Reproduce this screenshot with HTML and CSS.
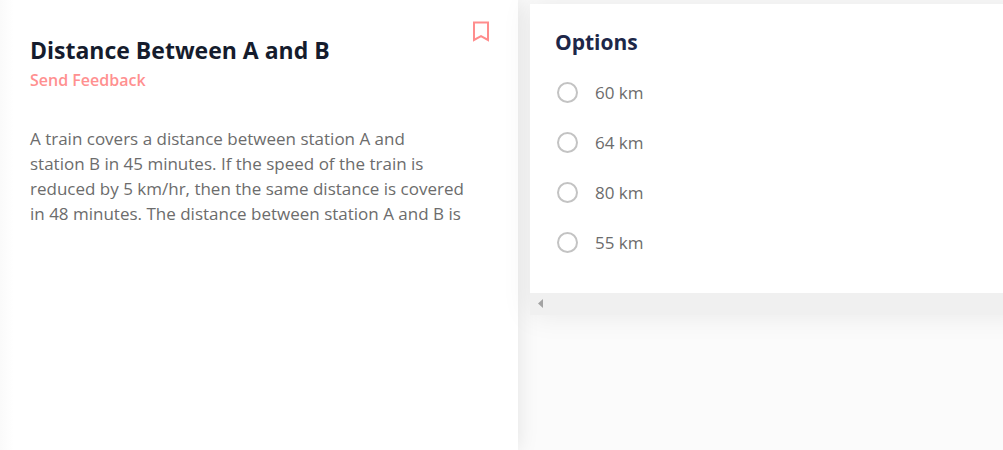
FILE: index.html
```html
<!DOCTYPE html>
<html lang="en">
<head>
<meta charset="utf-8">
<title>Distance Between A and B</title>
<link rel="stylesheet" href="styles.css">
</head>
<body>
<main class="layout">
  <section class="question">
    <header class="question-header">
      <div class="heading">
        <h1 class="title">Distance Between A and B</h1>
        <a class="feedback" href="#">Send Feedback</a>
      </div>
      <button class="bookmark" type="button" aria-label="Bookmark">
        <svg width="18" height="22" viewBox="0 0 18 22" fill="none" stroke="#ff8d8d" stroke-width="2"><path d="M2 2.5H16V20L9 16.2L2 20Z"/></svg>
      </button>
    </header>
    <p class="statement">A train covers a distance between station A and<br>station B in 45 minutes. If the speed of the train is<br>reduced by 5 km/hr, then the same distance is covered<br>in 48 minutes. The distance between station A and B is</p>
  </section>
  <section class="answer">
    <div class="card">
      <form class="options">
        <h2 class="options-title">Options</h2>
        <label class="option"><input class="radio" type="radio" name="answer">60 km</label>
        <label class="option"><input class="radio" type="radio" name="answer">64 km</label>
        <label class="option"><input class="radio" type="radio" name="answer">80 km</label>
        <label class="option"><input class="radio" type="radio" name="answer">55 km</label>
      </form>
      <div class="scrollbar">
        <button class="scroll-left" type="button" aria-label="Scroll left">
          <svg width="5" height="9" viewBox="0 0 5 9" fill="#a3a3a3"><path d="M5 0V9L0 4.5Z"/></svg>
        </button>
      </div>
    </div>
  </section>
</main>
</body>
</html>
```
FILE: styles.css
```css
* {
  box-sizing: border-box;
}

body {
  margin: 0;
  background: #fbfbfb;
  color: #6c6c6c;
  font: 17px/25px "Open Sans", "Noto Sans", sans-serif;
}

.layout {
  display: grid;
  grid-template-columns: 518fr 485fr;
  min-height: 100vh;
  overflow: hidden;
}

.question {
  padding: 20px 28px 20px 30px;
  background: linear-gradient(to right, #fafafa, #fff 14px);
  box-shadow: 0 0 20px rgba(0, 0, 0, 0.1);
}

.question-header {
  display: flex;
  justify-content: space-between;
  align-items: flex-start;
}

.title {
  margin: 15px 0 0;
  color: #151c2d;
  font: 700 23px/30px "Open Sans", sans-serif;
}

.feedback {
  display: block;
  color: #ff9090;
  font-size: 16px;
  font-weight: 600;
  line-height: 30px;
  text-decoration: none;
}

.bookmark,
.scroll-left {
  display: flex;
  padding: 0;
  border: 0;
  background: none;
  cursor: pointer;
}

.statement {
  margin: 31px 0 0;
}

.answer {
  padding: 4px 0 0 12px;
}

.card {
  margin-right: -24px;
  background: #fff;
  box-shadow: 0 0 28px rgba(0, 0, 0, 0.08);
}

.options {
  padding: 23px 25px 26px;
}

.options-title {
  margin: 0 0 10px;
  color: #1d2748;
  font: 700 21px/30px "Open Sans", sans-serif;
}

.option {
  display: flex;
  align-items: center;
  gap: 17px;
  height: 50px;
}

.radio {
  width: 21px;
  height: 21px;
  margin: 0 0 0 2px;
  border: 2px solid #c3c3c3;
  border-radius: 50%;
  appearance: none;
}

.radio:checked {
  background: radial-gradient(#ff8d8d 50%, #fff 55%);
}

.scrollbar {
  height: 22px;
  padding: 6px 8px;
  background: #f0f0f0;
}
```
